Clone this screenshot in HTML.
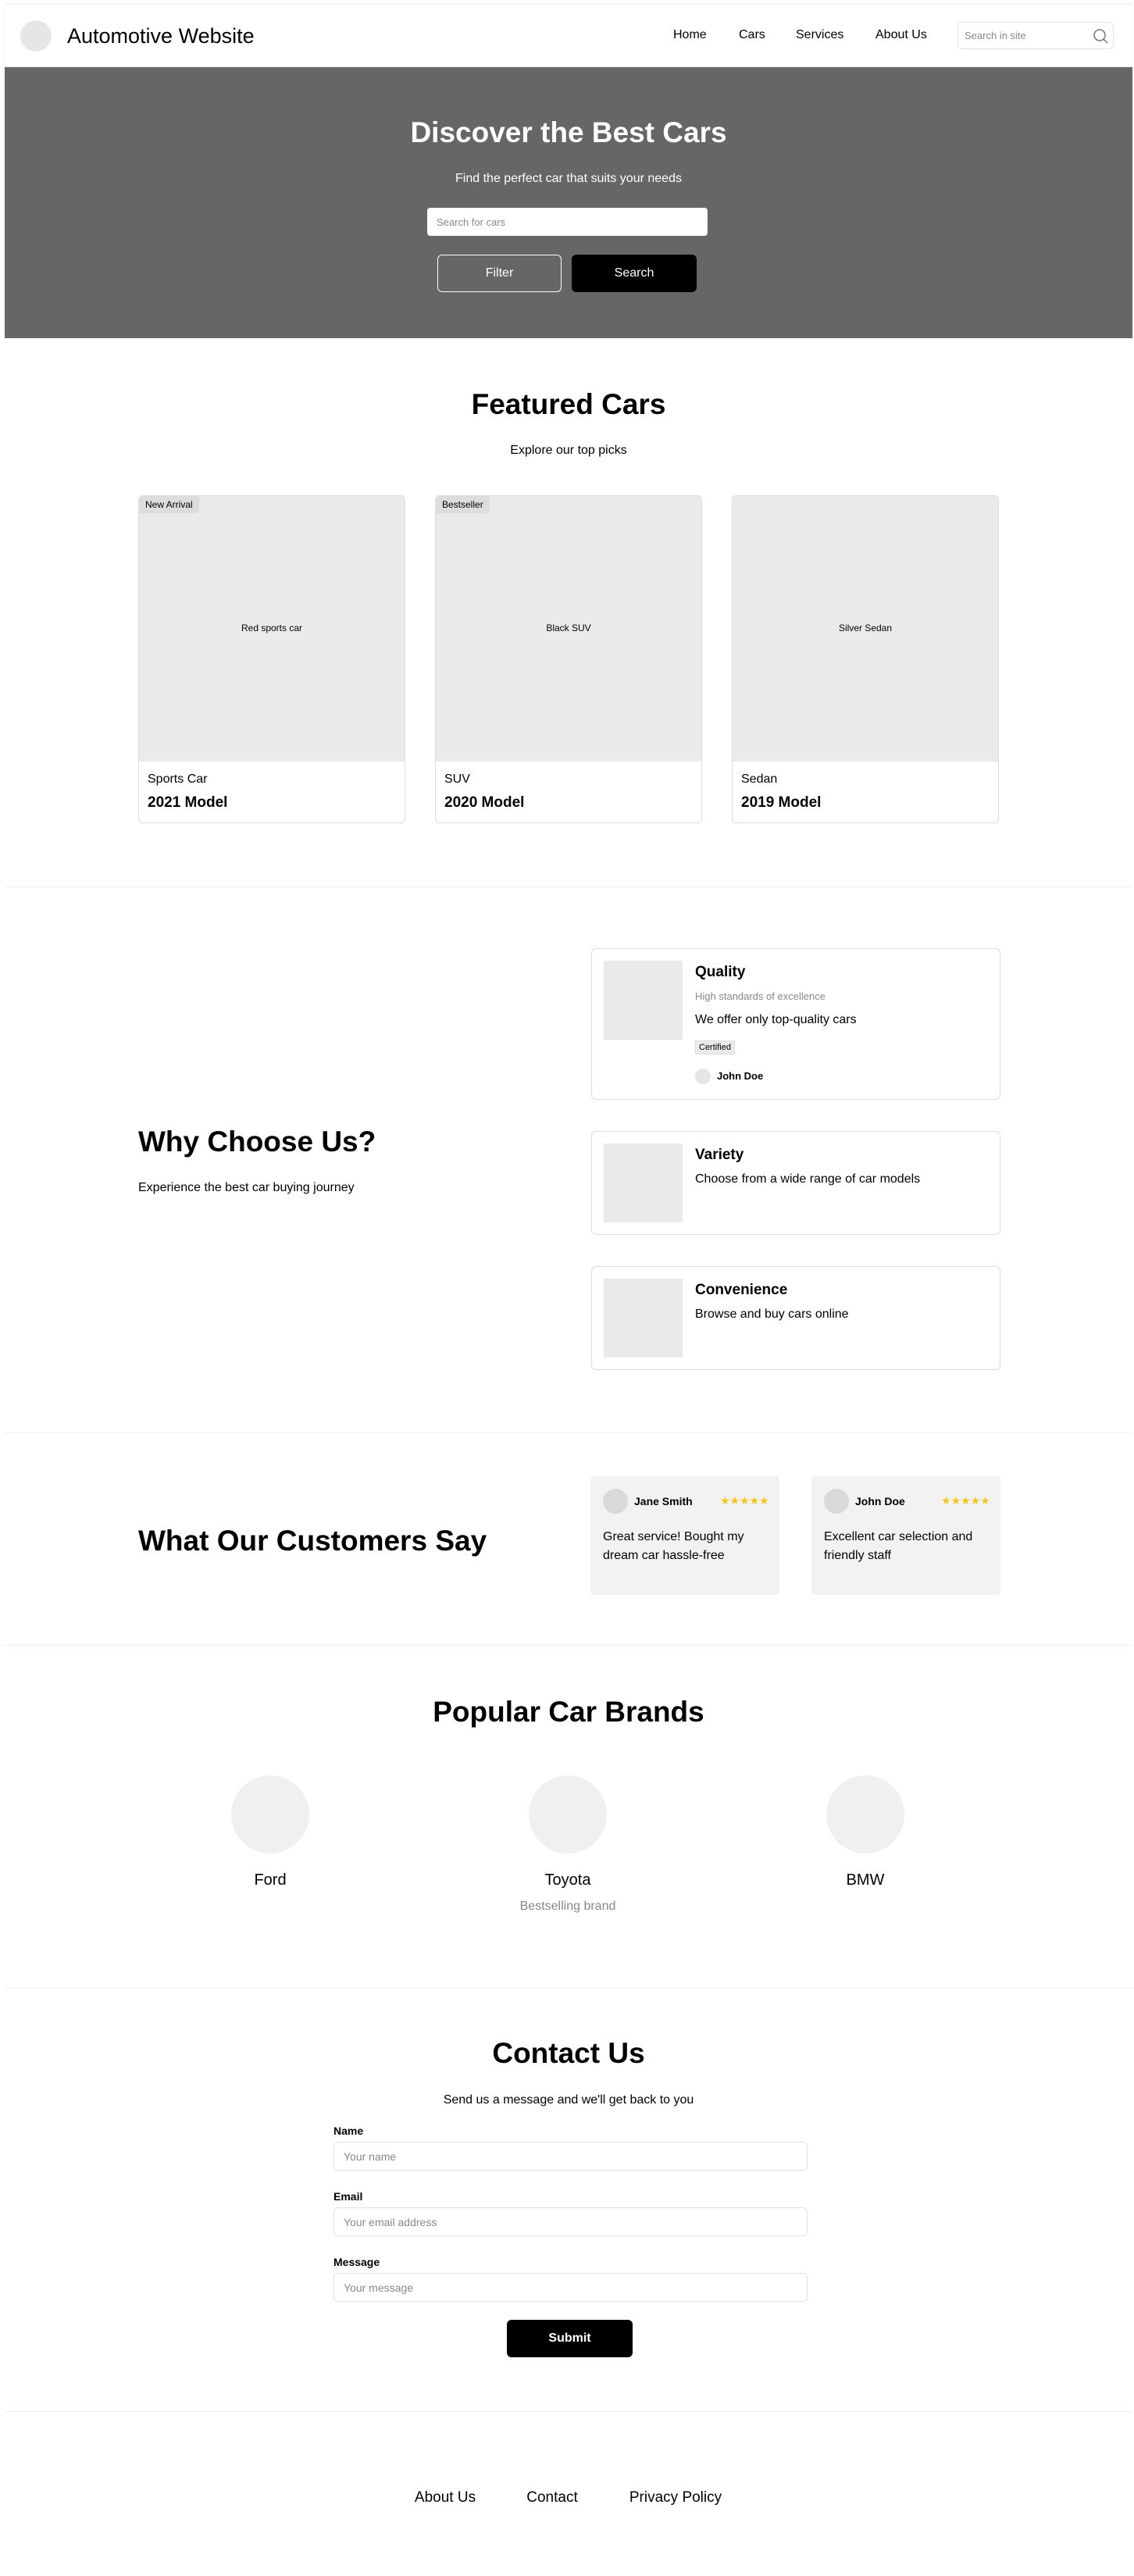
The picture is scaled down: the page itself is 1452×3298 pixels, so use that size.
<!DOCTYPE html>
<html><head><meta charset="utf-8"><style>
*{box-sizing:border-box;margin:0;padding:0}
body{width:1452px;height:3298px;position:relative;background:#fff;font-family:"Liberation Sans",Arial,sans-serif;color:#000;overflow:hidden}
.a{position:absolute}
.c{text-align:center}
.hr{position:absolute;left:6px;width:1444px;height:1px;background:#eee}
.card{position:absolute;border:1px solid #ddd;border-radius:6px;background:#fff;overflow:hidden}
.img{background:#eaeaea}
.inp{position:absolute;border:1px solid #e2e2e2;border-radius:6px;background:#fff;color:#888;font-size:14px;padding-left:12px;display:flex;align-items:center}
.star{color:#f5c518;font-size:14px;letter-spacing:0px}
.h{font-size:37px;font-weight:bold;line-height:48px}
</style></head><body>
<!-- header -->
<div class="a" style="left:6px;top:6px;width:1444px;height:80px;border-bottom:1px solid #eee;box-shadow:0 -1px 3px #eee"></div>
<div class="a" style="left:26px;top:26px;width:40px;height:40px;border-radius:50%;background:#e6e6e6"></div>
<div class="a" style="left:86px;top:28px;font-size:27px;line-height:36px">Automotive Website</div>
<div class="a" style="left:862px;top:36px;font-size:16px">Home</div>
<div class="a" style="left:946px;top:36px;font-size:16px">Cars</div>
<div class="a" style="left:1019px;top:36px;font-size:16px">Services</div>
<div class="a" style="left:1121px;top:36px;font-size:16px">About Us</div>
<div class="inp" style="left:1226px;top:28px;width:200px;height:35px;font-size:13px;padding-left:8px">Search in site</div>
<svg class="a" style="left:1398px;top:35px" width="22" height="22" viewBox="0 0 22 22"><circle cx="10" cy="10" r="7" fill="none" stroke="#777" stroke-width="1.5"/><line x1="15" y1="15" x2="20" y2="20" stroke="#777" stroke-width="1.5"/></svg>
<!-- hero -->
<div class="a" style="left:6px;top:86px;width:1444px;height:347px;background:#666"></div>
<div class="a c h" style="left:6px;width:1444px;top:146px;color:#fff">Discover the Best Cars</div>
<div class="a c" style="left:6px;width:1444px;top:220px;font-size:16px;color:#fff">Find the perfect car that suits your needs</div>
<div class="inp" style="left:547px;top:266px;width:359px;height:36px;border:none;border-radius:4px;font-size:13px">Search for cars</div>
<div class="a c" style="left:560px;top:326px;width:159px;height:48px;border:1.5px solid #fff;border-radius:6px;color:#fff;font-size:16px;line-height:45px">Filter</div>
<div class="a c" style="left:732px;top:326px;width:160px;height:48px;background:#000;border-radius:6px;color:#fff;font-size:16px;line-height:48px">Search</div>
<!-- featured -->
<div class="a c h" style="left:6px;width:1444px;top:494px">Featured Cars</div>
<div class="a c" style="left:6px;width:1444px;top:568px;font-size:16px">Explore our top picks</div>
<div class="card" style="left:177px;top:634px;width:342px;height:420px"><div class="img" style="height:340px;position:relative"><div class="a" style="left:0;top:0;background:#ddd;padding:4px 8px;font-size:12px;border-bottom-right-radius:5px">New Arrival</div><div class="a c" style="left:0;right:0;top:162px;font-size:12px">Red sports car</div></div><div style="padding:14px 11px 0;font-size:16px">Sports Car</div><div style="padding:10px 11px 0;font-size:19px;font-weight:bold">2021 Model</div></div>
<div class="card" style="left:557px;top:634px;width:342px;height:420px"><div class="img" style="height:340px;position:relative"><div class="a" style="left:0;top:0;background:#ddd;padding:4px 8px;font-size:12px;border-bottom-right-radius:5px">Bestseller</div><div class="a c" style="left:0;right:0;top:162px;font-size:12px">Black SUV</div></div><div style="padding:14px 11px 0;font-size:16px">SUV</div><div style="padding:10px 11px 0;font-size:19px;font-weight:bold">2020 Model</div></div>
<div class="card" style="left:937px;top:634px;width:342px;height:420px"><div class="img" style="height:340px;position:relative"><div class="a c" style="left:0;right:0;top:162px;font-size:12px">Silver Sedan</div></div><div style="padding:14px 11px 0;font-size:16px">Sedan</div><div style="padding:10px 11px 0;font-size:19px;font-weight:bold">2019 Model</div></div>
<div class="hr" style="top:1135px"></div>
<!-- why -->
<div class="a h" style="left:177px;top:1438px">Why Choose Us?</div>
<div class="a" style="left:177px;top:1512px;font-size:16px">Experience the best car buying journey</div>
<div class="card" style="left:757px;top:1214px;width:524px;height:194px"><div class="a img" style="left:15px;top:15px;width:101px;height:101px"></div>
<div class="a" style="left:132px;top:19px;font-size:19px;font-weight:bold">Quality</div>
<div class="a" style="left:132px;top:53px;font-size:13px;color:#888">High standards of excellence</div>
<div class="a" style="left:132px;top:82px;font-size:16px">We offer only top-quality cars</div>
<div class="a" style="left:132px;top:117px;font-size:11px;background:#eaeaea;border:1px solid #ddd;padding:2px 4px">Certified</div>
<div class="a" style="left:132px;top:153px;width:20px;height:20px;border-radius:50%;background:#e6e6e6"></div>
<div class="a" style="left:160px;top:155px;font-size:13px;font-weight:bold">John Doe</div></div>
<div class="card" style="left:757px;top:1448px;width:524px;height:133px"><div class="a img" style="left:15px;top:15px;width:101px;height:101px"></div>
<div class="a" style="left:132px;top:19px;font-size:19px;font-weight:bold">Variety</div>
<div class="a" style="left:132px;top:52px;font-size:16px">Choose from a wide range of car models</div></div>
<div class="card" style="left:757px;top:1621px;width:524px;height:133px"><div class="a img" style="left:15px;top:15px;width:101px;height:101px"></div>
<div class="a" style="left:132px;top:19px;font-size:19px;font-weight:bold">Convenience</div>
<div class="a" style="left:132px;top:52px;font-size:16px">Browse and buy cars online</div></div>
<div class="hr" style="top:1834px"></div>
<!-- testimonials -->
<div class="a h" style="left:177px;top:1949px">What Our Customers Say</div>
<div class="a" style="left:756px;top:1890px;width:242px;height:152px;background:#f2f2f2;border-radius:5px">
<div class="a" style="left:16px;top:16px;width:32px;height:32px;border-radius:50%;background:#d9d9d9"></div>
<div class="a" style="left:56px;top:24px;font-size:14px;font-weight:bold">Jane Smith</div>
<div class="a star" style="left:166px;top:23px">★★★★★</div>
<div class="a" style="left:16px;top:66px;font-size:16px;line-height:24px;width:215px">Great service! Bought my dream car hassle-free</div></div>
<div class="a" style="left:1039px;top:1890px;width:242px;height:152px;background:#f2f2f2;border-radius:5px">
<div class="a" style="left:16px;top:16px;width:32px;height:32px;border-radius:50%;background:#d9d9d9"></div>
<div class="a" style="left:56px;top:24px;font-size:14px;font-weight:bold">John Doe</div>
<div class="a star" style="left:166px;top:23px">★★★★★</div>
<div class="a" style="left:16px;top:66px;font-size:16px;line-height:24px;width:215px">Excellent car selection and friendly staff</div></div>
<div class="hr" style="top:2106px"></div>
<!-- brands -->
<div class="a c h" style="left:6px;width:1444px;top:2168px">Popular Car Brands</div>
<div class="a" style="left:296px;top:2273px;width:100px;height:100px;border-radius:50%;background:#f0f0f0"></div>
<div class="a" style="left:677px;top:2273px;width:100px;height:100px;border-radius:50%;background:#f0f0f0"></div>
<div class="a" style="left:1058px;top:2273px;width:100px;height:100px;border-radius:50%;background:#f0f0f0"></div>
<div class="a c" style="left:246px;width:200px;top:2396px;font-size:20px">Ford</div>
<div class="a c" style="left:627px;width:200px;top:2396px;font-size:20px">Toyota</div>
<div class="a c" style="left:1008px;width:200px;top:2396px;font-size:20px">BMW</div>
<div class="a c" style="left:627px;width:200px;top:2432px;font-size:16px;color:#888">Bestselling brand</div>
<div class="hr" style="top:2545px"></div>
<!-- contact -->
<div class="a c h" style="left:6px;width:1444px;top:2605px">Contact Us</div>
<div class="a c" style="left:6px;width:1444px;top:2680px;font-size:16px">Send us a message and we'll get back to you</div>
<div class="a" style="left:427px;top:2720px;font-size:14px;font-weight:bold">Name</div>
<div class="inp" style="left:427px;top:2742px;width:607px;height:37px">Your name</div>
<div class="a" style="left:427px;top:2804px;font-size:14px;font-weight:bold">Email</div>
<div class="inp" style="left:427px;top:2826px;width:607px;height:37px">Your email address</div>
<div class="a" style="left:427px;top:2888px;font-size:14px;font-weight:bold">Message</div>
<div class="inp" style="left:427px;top:2910px;width:607px;height:37px">Your message</div>
<div class="a c" style="left:649px;top:2970px;width:161px;height:48px;background:#000;border-radius:6px;color:#fff;font-size:16px;font-weight:bold;line-height:48px">Submit</div>
<div class="hr" style="top:3087px"></div>
<!-- footer -->
<div class="a c" style="left:470px;width:200px;top:3187px;font-size:19px">About Us</div>
<div class="a c" style="left:607px;width:200px;top:3187px;font-size:19px">Contact</div>
<div class="a c" style="left:765px;width:200px;top:3187px;font-size:19px">Privacy Policy</div>
</body></html>
